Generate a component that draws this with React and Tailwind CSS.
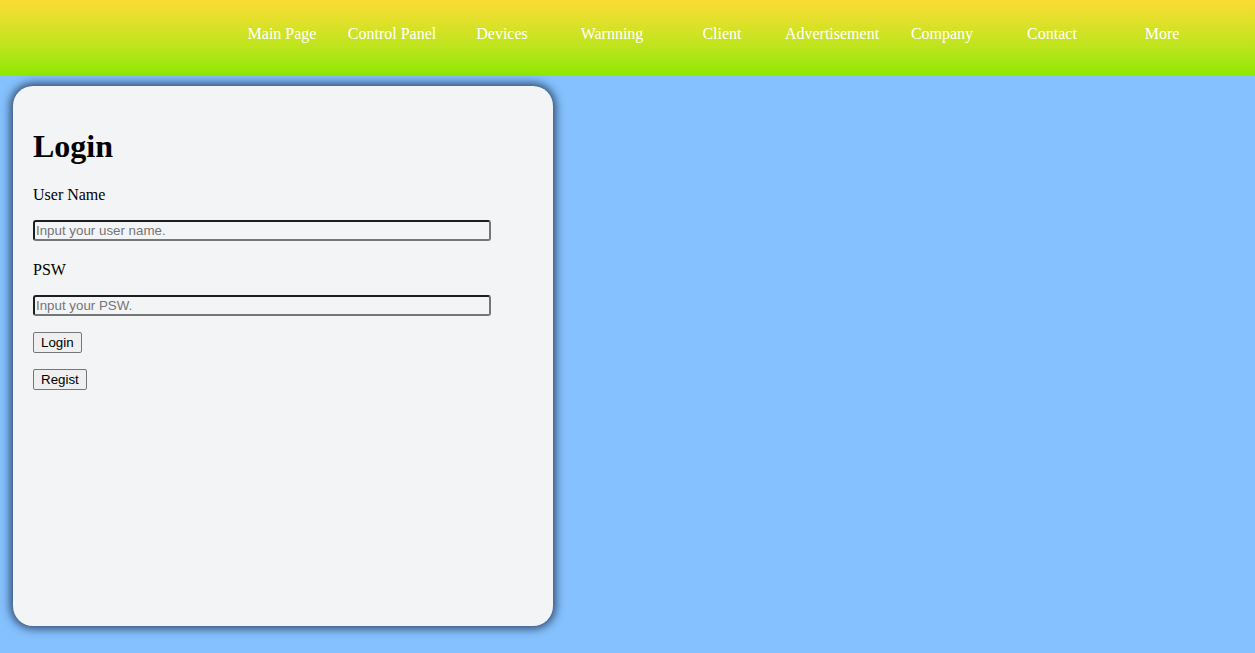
export default function App() {
  const nav = ["Main Page", "Control Panel", "Devices", "Warnning", "Client", "Advertisement", "Company", "Contact", "More"];
  return (
    <div className="min-h-[653px] bg-[#85c1fe]" style={{ fontFamily: '"Liberation Serif", "Times New Roman", serif' }}>
      <header className="h-[75px] bg-gradient-to-b from-[#fbdc33] to-[#8ee800] flex justify-end pr-[38px]">
        <nav className="flex items-start pt-[25px]">
          {nav.map((n) => (
            <div key={n} className="w-[110px] text-center text-white text-[16px] leading-[18px]">{n}</div>
          ))}
        </nav>
      </header>
      <div className="pt-[11px] pl-[13px]">
        <div className="w-[540px] h-[540px] bg-[#f3f4f6] rounded-[20px] shadow-[0_0_8px_3px_rgba(30,50,80,0.8)] px-5 pt-[42px] text-black">
          <h1 className="text-[32px] font-bold leading-[37px] mt-0 mb-[21px]">Login</h1>
          <p className="text-[16px] leading-[18px]">User Name</p>
          <input
            placeholder="Input your user name."
            className="block mt-4 w-[458px] h-[21px] bg-transparent border-2 border-[#767676] border-t-[#1e1e1e] border-l-[#1e1e1e] rounded-[3px] px-[1px] text-[13.33px] placeholder:text-[#757575] outline-none"
            style={{ fontFamily: '"Liberation Sans", Arial, sans-serif' }}
          />
          <p className="mt-5 text-[16px] leading-[18px]">PSW</p>
          <input
            placeholder="Input your PSW."
            className="block mt-4 w-[458px] h-[21px] bg-transparent border-2 border-[#767676] border-t-[#1e1e1e] border-l-[#1e1e1e] rounded-[3px] px-[1px] text-[13.33px] placeholder:text-[#757575] outline-none"
            style={{ fontFamily: '"Liberation Sans", Arial, sans-serif' }}
          />
          <button
            className="block mt-4 h-[21px] px-[7px] bg-[#efefef] border border-[#767676] rounded-[2px] text-[13.33px] leading-none text-black"
            style={{ fontFamily: '"Liberation Sans", Arial, sans-serif' }}
          >Login</button>
          <button
            className="block mt-4 h-[21px] px-[7px] bg-[#efefef] border border-[#767676] rounded-[2px] text-[13.33px] leading-none text-black"
            style={{ fontFamily: '"Liberation Sans", Arial, sans-serif' }}
          >Regist</button>
        </div>
      </div>
    </div>
  );
}
